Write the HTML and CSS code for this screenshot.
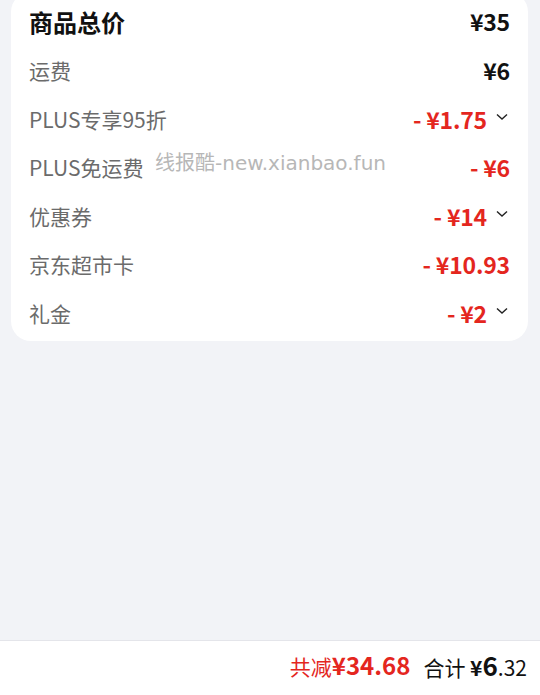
FILE: index.html
```html
<!DOCTYPE html>
<html lang="zh">
<head>
<meta charset="utf-8">
<link rel="stylesheet" href="styles.css">
</head>
<body>
<div class="page">
  <div class="card">
    <div class="row head">
      <span class="label">商品总价</span>
      <span class="val">¥35</span>
    </div>
    <div class="row">
      <span class="label">运费</span>
      <span class="val">¥6</span>
    </div>
    <div class="row">
      <span class="label">PLUS专享95折</span>
      <span class="val red">- ¥1.75<svg class="chev" viewBox="0 0 12 8"><path d="M1 1.5 L6 6 L11 1.5" fill="none" stroke="#222" stroke-width="1.4"/></svg></span>
    </div>
    <div class="row">
      <span class="label">PLUS免运费</span>
      <span class="val red">- ¥6</span>
    </div>
    <div class="row">
      <span class="label">优惠券</span>
      <span class="val red">- ¥14<svg class="chev" viewBox="0 0 12 8"><path d="M1 1.5 L6 6 L11 1.5" fill="none" stroke="#222" stroke-width="1.4"/></svg></span>
    </div>
    <div class="row">
      <span class="label">京东超市卡</span>
      <span class="val red">- ¥10.93</span>
    </div>
    <div class="row">
      <span class="label">礼金</span>
      <span class="val red">- ¥2<svg class="chev" viewBox="0 0 12 8"><path d="M1 1.5 L6 6 L11 1.5" fill="none" stroke="#222" stroke-width="1.4"/></svg></span>
    </div>
    <div class="watermark">线报酷-new.xianbao.fun</div>
  </div>
  <div class="spacer"></div>
  <div class="bar">
    <span class="saved">共减<b>¥34.68</b></span>
    <span class="total">合计 <b class="yen">¥</b><b class="big">6</b>.32</span>
  </div>
</div>
</body>
</html>
```
FILE: styles.css
```css
* { box-sizing: border-box; }
html, body { margin: 0; padding: 0; }
body {
  background: #f2f3f7;
  font-family: "Noto Sans CJK SC", "Noto Sans", sans-serif;
  width: 540px;
  height: 695px;
  overflow: hidden;
}
.page {
  display: flex;
  flex-direction: column;
  height: 695px;
}
.card {
  position: relative;
  margin: -8px 12px 0 11px;
  background: #fff;
  border-radius: 20px;
  padding: 0 18px 4px 18px;
}
.row {
  display: flex;
  justify-content: space-between;
  align-items: center;
  height: 48.5px;
}
.row.head { height: 54px; padding-top: 4px; }
.label {
  font-size: 21px;
  color: #6b6b6b;
}
.head .label {
  font-size: 24px;
  font-weight: 700;
  color: #111;
}
.val {
  display: flex;
  align-items: center;
  font-size: 23px;
  font-weight: 700;
  color: #111;
  letter-spacing: -0.2px;
}
.val.red { color: #e4261e; }
.chev {
  width: 12px;
  height: 8px;
  margin-left: 9px;
  margin-right: 2px;
  position: relative;
  top: -2px;
}
.watermark {
  position: absolute;
  left: 144px;
  top: 155px;
  font-family: "DejaVu Sans", "Noto Sans CJK SC", sans-serif;
  font-size: 20px;
  color: #b7b7b7;
}
.spacer { flex: 1; }
.bar {
  height: 55px;
  background: #fff;
  border-top: 1px solid #e4e5ea;
  display: flex;
  justify-content: flex-end;
  align-items: center;
  padding: 0 13px 8px 0;
  gap: 13px;
}
.saved {
  color: #e4261e;
  font-size: 21px;
}
.saved b { font-size: 24px; font-weight: 700; }
.total {
  color: #111;
  font-size: 21px;
}
.total .yen { font-size: 21px; font-weight: 700; }
.total .big { font-size: 26px; font-weight: 700; }
```
